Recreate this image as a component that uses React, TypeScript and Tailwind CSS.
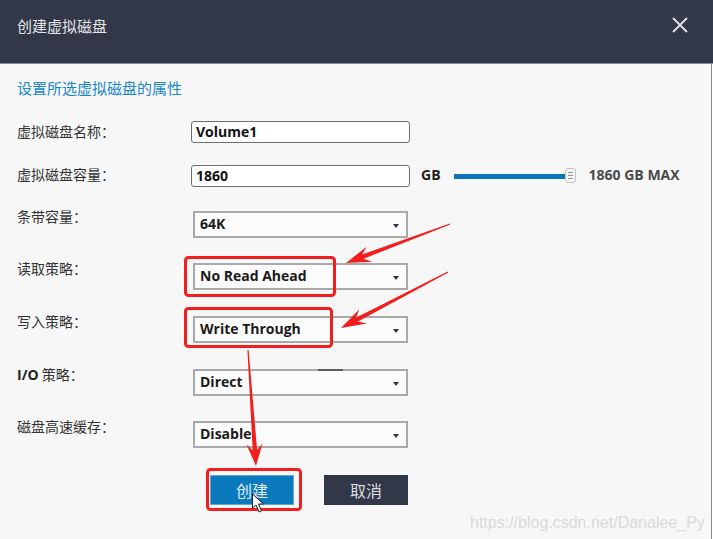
import React from "react";

type Pt = [number, number];

// tapered snipping-tool style arrow, returned as polygon points
function arrowPoints(t: Pt, p: Pt, len = 24, half = 8, neck = 2.2) {
  const dx = p[0] - t[0];
  const dy = p[1] - t[1];
  const l = Math.hypot(dx, dy);
  const ux = dx / l;
  const uy = dy / l;
  const nx = -uy;
  const ny = ux;
  const b: Pt = [p[0] - ux * len, p[1] - uy * len];
  const k: Pt = [p[0] - ux * len * 0.72, p[1] - uy * len * 0.72];
  const pts: Pt[] = [
    [t[0] + nx * 0.6, t[1] + ny * 0.6],
    [k[0] + nx * neck, k[1] + ny * neck],
    [b[0] + nx * half, b[1] + ny * half],
    p,
    [b[0] - nx * half, b[1] - ny * half],
    [k[0] - nx * neck, k[1] - ny * neck],
    [t[0] - nx * 0.6, t[1] - ny * 0.6],
  ];
  return pts.map((q) => q.map((v) => v.toFixed(1)).join(",")).join(" ");
}

const cjk = "font-['Noto_Sans_CJK_SC',sans-serif]";
const latin = "font-['Open_Sans','Noto_Sans_CJK_SC',sans-serif]";

const Select = ({ value, mark }: { value: string; mark?: boolean }) => (
  <div className="relative w-[215px] h-[27px] border-2 border-[#a9a9a9] bg-[#fbfbfb] flex items-center pl-[5px] pr-[7px]">
    <span className={`${latin} font-bold text-[14px] text-[#1a1a1a] flex-1 leading-none -mt-[2px]`}>
      {value}
    </span>
    <svg width="6" height="4" viewBox="0 0 6 4" className="mt-[3px]">
      <path d="M0 0 H6 L3 4 Z" fill="#2f3544" />
    </svg>
    {mark && <div className="absolute -top-[2px] left-[123px] w-[25px] h-[2px] bg-[#5a5a5a]" />}
  </div>
);

const Row = ({ label, children, top }: { label: React.ReactNode; children: React.ReactNode; top: string }) => (
  <div className={`flex items-start ${top}`}>
    <div className={`${cjk} w-[176px] text-[14px] leading-5 text-[#333] -mt-[5px]`}>{label}</div>
    {children}
  </div>
);

export default function App() {
  return (
    <div className="relative w-[713px] h-[539px] overflow-hidden bg-white">
      <div className="h-[64px] bg-[#323847] border-b border-[#858b96] flex items-start justify-between pl-[17px] pr-[25px] pt-[16px]">
        <span className={`${cjk} text-[15px] leading-5 text-[#e4e6ea]`}>创建虚拟磁盘</span>
        <svg width="16" height="16" viewBox="0 0 16 16" className="mt-[1px]">
          <path d="M1 1 L15 15 M15 1 L1 15" stroke="#e2e4e8" strokeWidth="1.8" />
        </svg>
      </div>

      <div className="h-[475px] mr-[1px] border-r border-[#8c8c8c] bg-[#f7f7f7] pl-[17px] pt-[14px]">
        <div className={`${cjk} text-[15px] leading-5 text-[#1b87c9]`}>设置所选虚拟磁盘的属性</div>

        <div className="flex items-center mt-[23px]">
          <div className={`${cjk} w-[174px] text-[14px] leading-5 text-[#333] -mt-[3px]`}>虚拟磁盘名称：</div>
          <div className="w-[219px] h-[22px] rounded-[3px] border-[1.5px] border-[#6e6e6e] bg-white flex items-center pl-[4px]">
            <span className={`${latin} font-bold text-[14px] text-[#111] leading-none`}>Volume1</span>
          </div>
        </div>

        <div className="flex items-center mt-[22px]">
          <div className={`${cjk} w-[174px] text-[14px] leading-5 text-[#333] -mt-[4px]`}>虚拟磁盘容量：</div>
          <div className="w-[219px] h-[22px] rounded-[3px] border-[1.5px] border-[#6e6e6e] bg-white flex items-center pl-[4px]">
            <span className={`${latin} font-bold text-[14px] text-[#111] leading-none`}>1860</span>
          </div>
          <span className={`${latin} font-bold text-[14px] text-[#222] ml-[11px] -mt-[4px]`}>GB</span>
          <div className="relative ml-[13px] w-[122px] h-[16px] flex items-center">
            <div className="w-[113px] h-[5px] bg-[#0a78b8]" />
            <div className="absolute left-[111px] top-[0px] w-[11px] h-[15px] rounded-[3px] border border-[#c4c4c4] bg-[#f4f4f4] flex flex-col items-center justify-center gap-[2px]">
              <div className="w-[5px] h-px bg-[#999]" />
              <div className="w-[5px] h-px bg-[#999]" />
              <div className="w-[5px] h-px bg-[#999]" />
            </div>
          </div>
          <span className={`${latin} font-bold text-[14px] text-[#4a4a4a] ml-[13px] -mt-[4px]`}>1860 GB MAX</span>
        </div>

        <Row label="条带容量：" top="mt-[24px]">
          <Select value="64K" />
        </Row>
        <Row label="读取策略：" top="mt-[25px]">
          <Select value="No Read Ahead" />
        </Row>
        <Row label="写入策略：" top="mt-[26px]">
          <Select value="Write Through" />
        </Row>
        <Row
          label={
            <>
              <span className={`${latin} font-bold text-[#222]`}>I/O</span> 策略：
            </>
          }
          top="mt-[26px]"
        >
          <Select value="Direct" mark />
        </Row>
        <Row label="磁盘高速缓存：" top="mt-[25px]">
          <Select value="Disable" />
        </Row>

        <div className="flex gap-[30px] ml-[193px] mt-[27px]">
          <button className={`${cjk} w-[84px] h-[30px] bg-[#0a7abd] border border-[#5fa8d6] text-[16px] text-[#e3edf6]`}>
            创建
          </button>
          <button className={`${cjk} w-[84px] h-[30px] bg-[#323847] text-[16px] text-[#dcdde0]`}>取消</button>
        </div>
      </div>

      <span className="absolute left-[470px] top-[511px] font-['Liberation_Sans',sans-serif] text-[16px] text-[#dadada]">
        https://blog.csdn.net/Danalee_Py
      </span>

      <svg className="absolute inset-0 pointer-events-none" width="713" height="539" viewBox="0 0 713 539">
        <rect x="185.5" y="257.5" width="149" height="38" rx="3" fill="none" stroke="#f21d1d" strokeWidth="3" />
        <rect x="185.5" y="308.5" width="146" height="38" rx="3" fill="none" stroke="#f21d1d" strokeWidth="3" />
        <rect x="207.5" y="469.5" width="93" height="40" rx="3" fill="none" stroke="#f21d1d" strokeWidth="3" />
        <polygon points={arrowPoints([450, 224], [346, 263], 25, 8)} fill="#f21d1d" />
        <polygon points={arrowPoints([448, 272], [341, 328], 25, 8)} fill="#f21d1d" />
        <polygon points={arrowPoints([248, 350], [256, 466], 22, 8)} fill="#f21d1d" />
        <path
          d="M252.5 494 L252.5 508 L256 505 L259 512 L261.5 511 L258.5 504 L263.5 504 Z"
          fill="#fff"
          stroke="#222"
          strokeWidth="1"
          strokeLinejoin="round"
        />
      </svg>
    </div>
  );
}
